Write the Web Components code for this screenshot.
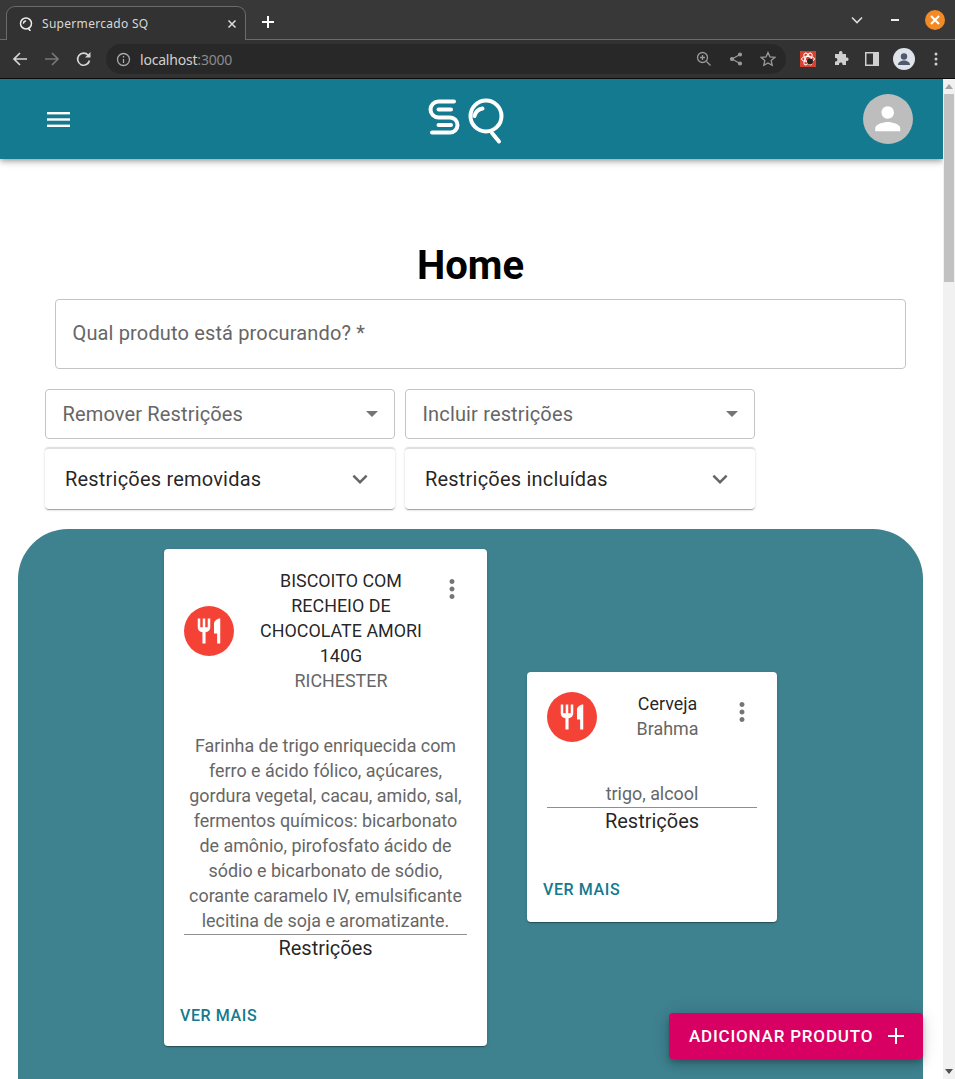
<!DOCTYPE html>
<html lang="pt-BR"><head><meta charset="utf-8"><title>Supermercado SQ</title>
<style>
html,body{margin:0;padding:0;height:1079px;overflow:hidden;background:#fff;font-family:Roboto,"Noto Sans",sans-serif}
body{display:flex;flex-direction:column}
</style></head><body>
<browser-chrome></browser-chrome>
<app-viewport>
  <app-bar></app-bar>
  <page-title>Home</page-title>
  <search-field label="Qual produto está procurando? *"></search-field>
  <filter-row>
    <select-field label="Remover Restrições"></select-field>
    <select-field label="Incluir restrições"></select-field>
  </filter-row>
  <filter-row tight>
    <accordion-box label="Restrições removidas"></accordion-box>
    <accordion-box label="Restrições incluídas"></accordion-box>
  </filter-row>
  <product-panel>
    <product-card style="width:323px" title-text="BISCOITO COM RECHEIO DE CHOCOLATE AMORI 140G" brand="RICHESTER" desc="Farinha de trigo enriquecida com ferro e ácido fólico, açúcares, gordura vegetal, cacau, amido, sal, fermentos químicos: bicarbonato de amônio, pirofosfato ácido de sódio e bicarbonato de sódio, corante caramelo IV, emulsificante lecitina de soja e aromatizante."></product-card>
    <product-card style="width:250px;min-height:250px;margin-bottom:1px;--fb:21px" title-text="Cerveja" brand="Brahma" desc="trigo, alcool"></product-card>
  </product-panel>
  <add-button>ADICIONAR PRODUTO</add-button>
</app-viewport>
<script>
const def=(n,html)=>customElements.define(n,class extends HTMLElement{connectedCallback(){if(this.shadowRoot)return;const r=this.attachShadow({mode:'open'});const a=k=>this.getAttribute(k)||'';r.innerHTML=html(a);}});

def('browser-chrome',()=>`<style>
:host{display:block;height:79px;flex:none;background:#353535;font-family:"Noto Sans",Roboto,sans-serif;color:#ddd}
.tabs{height:40px;display:flex;align-items:flex-end;border-bottom:1px solid #6b6b6b;box-sizing:border-box;background:#383838}
.tab{width:240px;height:34px;margin:0 0 -1px 6px;box-sizing:border-box;background:#323232;border:1px solid #6b6b6b;border-bottom:none;border-radius:9px 9px 0 0;display:flex;align-items:center;padding:0 8px 0 12px;font-size:12px;gap:9px;letter-spacing:.3px;color:#d8d8d8}
.tab span{flex:1;white-space:nowrap}
.plus{margin:0 0 0 15px;height:34px;display:flex;align-items:center}
.right{margin-left:auto;height:39px;display:flex;align-items:center;gap:23px;padding-right:10px}
.close{width:20px;height:20px;border-radius:50%;background:#f28a25;display:flex;align-items:center;justify-content:center}
.bar{height:38px;background:#323232;display:flex;align-items:center;box-sizing:border-box}
.nav{display:flex;align-items:center;gap:16px;padding-left:12px;width:106px;box-sizing:border-box}
.omni{width:680px;height:30px;border-radius:15px;background:#282828;display:flex;align-items:center;box-sizing:border-box;padding:0 10px;font-size:14px;gap:8px;letter-spacing:-.2px}
.omni b{font-weight:400;color:#d0d0d0}.omni i{font-style:normal;color:#8a8a8a}
.omni .end{margin-left:auto;display:flex;gap:17px;align-items:center}
.tools{display:flex;align-items:center;gap:14px;padding-left:14px}
.line{height:1px;background:#0b0b0b}
svg{display:block}
</style>
<div class="tabs"><div class="tab">
<svg width="14" height="14" viewBox="0 0 14 14" fill="none" stroke="#eee" stroke-width="1.5" stroke-linecap="round"><circle cx="7" cy="6.5" r="5.5"/><path d="M9.5 11.5l1.5 2M4.5 6a2.5 2.5 0 0 1 2-2"/></svg>
<span>Supermercado SQ</span>
<svg width="10" height="10" viewBox="0 0 10 10" stroke="#ddd" stroke-width="1.5"><path d="M1.5 1.5l7 7M8.5 1.5l-7 7"/></svg></div>
<div class="plus"><svg width="14" height="14" viewBox="0 0 14 14" stroke="#fff" stroke-width="2"><path d="M7 1v12M1 7h12"/></svg></div>
<div class="right">
<svg width="12" height="8" viewBox="0 0 12 8" fill="none" stroke="#ddd" stroke-width="1.6"><path d="M1 1.5l5 5 5-5"/></svg>
<svg width="10" height="4" viewBox="0 0 10 4" style="margin:0 1px 0 5px"><rect width="8" height="2" y="1" fill="#eee"/></svg>
<div class="close"><svg width="10" height="10" viewBox="0 0 10 10" stroke="#fff" stroke-width="2"><path d="M1 1l8 8M9 1l-8 8"/></svg></div>
</div></div>
<div class="bar"><div class="nav">
<svg width="16" height="16" viewBox="0 0 16 16" fill="none" stroke="#d5d5d5" stroke-width="1.7"><path d="M15 8H2M8 2L2 8l6 6"/></svg>
<svg width="16" height="16" viewBox="0 0 16 16" fill="none" stroke="#777" stroke-width="1.7"><path d="M1 8h13M8 2l6 6-6 6"/></svg>
<svg width="16" height="16" viewBox="0 0 16 16" fill="none" stroke="#d5d5d5" stroke-width="1.7"><path d="M13.500 9.500a6 6 0 1 1-1.300-5.200"/><path d="M14.500 1v5.500H9z" fill="#d5d5d5" stroke="none"/></svg>
</div>
<div class="omni">
<svg width="15" height="15" viewBox="0 0 15 15" fill="none" stroke="#aaa" stroke-width="1.3"><circle cx="7.500" cy="7.500" r="6"/><path d="M7.500 7v4M7.500 4v1.500"/></svg>
<span style="margin-left:1px"><b>localhost</b><i>:3000</i></span>
<span class="end">
<svg width="16" height="16" viewBox="0 0 16 16" fill="none" stroke="#9a9a9a" stroke-width="1.3"><circle cx="6.500" cy="6.500" r="5"/><path d="M10.500 10.500l4 4M4 6.500h5M6.500 4v5"/></svg>
<svg width="14" height="14" viewBox="0 0 14 14" fill="#9a9a9a" stroke="#9a9a9a" stroke-width="1.2"><path d="M11 2.500L3 7l8 4.500" fill="none"/><circle cx="11" cy="2.500" r="1.500"/><circle cx="3" cy="7" r="1.500"/><circle cx="11" cy="11.500" r="1.500"/></svg>
<svg width="16" height="16" viewBox="0 0 16 16" fill="none" stroke="#9a9a9a" stroke-width="1.3"><path d="M8 1.500l2 4.400 4.800.5-3.600 3.200 1 4.700L8 11.900l-4.200 2.400 1-4.700L1.200 6.400 6 5.900z"/></svg>
</span></div>
<div class="tools">
<svg width="16" height="16" viewBox="0 0 16 16"><rect width="16" height="16" fill="#d8402f"/><g fill="none" stroke="#fff" stroke-width="1"><ellipse cx="8" cy="8" rx="6.500" ry="2.600"/><ellipse cx="8" cy="8" rx="6.500" ry="2.600" transform="rotate(60 8 8)"/><ellipse cx="8" cy="8" rx="6.500" ry="2.600" transform="rotate(120 8 8)"/></g><circle cx="10" cy="10.500" r="3" fill="#222"/></svg>
<svg width="16" height="16" viewBox="0 0 16 16" fill="#cfcfcf" style="margin-left:3px"><path d="M6 1.500a1.800 1.800 0 0 1 3.500 0V3H13v3.500h1.200a1.800 1.800 0 0 1 0 3.500H13v4H9.500v-1a1.800 1.800 0 0 0-3.500 0v1H2V10.500h1a1.800 1.800 0 0 0 0-3.500H2V3h4z"/></svg>
<svg width="14" height="14" viewBox="0 0 14 14" style="margin-left:2px"><rect width="14" height="14" fill="#cfcfcf"/><rect x="1.500" y="1.500" width="6.500" height="11" fill="#323232"/></svg>
<svg width="22" height="22" viewBox="0 0 22 22"><circle cx="11" cy="11" r="11" fill="#dfe3ea"/><circle cx="11" cy="8.500" r="3.200" fill="#4f5a6f"/><path d="M5 17c0-3 3-4.500 6-4.500s6 1.500 6 4.500z" fill="#4f5a6f"/></svg>
<svg width="4" height="14" viewBox="0 0 4 14" fill="#cfcfcf" style="margin-left:5px"><circle cx="2" cy="2" r="1.500"/><circle cx="2" cy="7" r="1.500"/><circle cx="2" cy="12" r="1.500"/></svg>
</div></div><div class="line"></div>`);

def('app-viewport',()=>`<style>
:host{display:flex;flex:1;min-height:0;position:relative;overflow:hidden}
.main{flex:1;min-width:0;display:flex;flex-direction:column;overflow:hidden}
.sb{width:12px;flex:none;background:#f1f1f1;display:flex;flex-direction:column;align-items:center;position:relative}
.thumb{width:10px;height:188px;margin-top:15px;background:#c1c1c1}
.up,.dn{position:absolute;left:2px;width:0;height:0;border-left:4px solid transparent;border-right:4px solid transparent}
.up{top:5px;border-bottom:5px solid #a3a3a3}.dn{bottom:5px;border-top:5px solid #505050}
</style><div class="main"><slot></slot></div><div class="sb"><div class="up"></div><div class="thumb"></div><div class="dn"></div></div>`);

def('app-bar',()=>`<style>
:host{display:flex;align-items:center;justify-content:space-between;height:80px;flex:none;background:#137a8f;padding:0 30px 0 47px;box-sizing:border-box;box-shadow:0 2px 4px -1px rgba(0,0,0,.2),0 4px 5px rgba(0,0,0,.14),0 1px 10px rgba(0,0,0,.12);position:relative;z-index:2}
.a{width:50px;height:50px;border-radius:50%;background:#bdbdbd;display:flex;align-items:center;justify-content:center}
svg{display:block}
</style>
<svg width="23" height="15" viewBox="0 0 23 15" fill="#fff" style="margin-top:1px"><rect width="23" height="2.400" y="0"/><rect width="23" height="2.400" y="6.300"/><rect width="23" height="2.400" y="12.600"/></svg>
<svg width="80" height="52" viewBox="426 95 80 52" fill="none" stroke="#fff" stroke-width="4" stroke-linecap="round" stroke-linejoin="round"><path d="M453 103.500H437.500a8 8 0 0 0 0 16H449a7.500 7.500 0 0 1 0 15H431"/><path d="M437.500 111.500H450M437.500 127H450"/><circle cx="485" cy="118" r="15.500"/><path d="M473.500 118a10 10 0 0 1 8-7.500M491 135l7 8.500"/></svg>
<div class="a"><svg width="37.500" height="37.500" viewBox="0 0 24 24" fill="#fff"><path d="M12 12c2.210 0 4-1.790 4-4s-1.790-4-4-4-4 1.790-4 4 1.790 4 4 4zm0 2c-2.670 0-8 1.340-8 4v2h16v-2c0-2.660-5.330-4-8-4z"/></svg></div>`);

def('page-title',()=>`<style>:host{display:block;flex:none;margin-top:79px;height:61px;padding-right:2px}
h1{margin:0;font:700 40px/56px Roboto,sans-serif;text-align:center;color:#000}</style><h1><slot></slot></h1>`);

def('search-field',a=>`<style>:host{display:block;flex:none;height:70px;margin:0 37px 0 55px;box-sizing:border-box;border:1px solid #c4c4c4;border-radius:4px;padding:0 16.500px;font:400 20px/66px Roboto,sans-serif;color:#666;letter-spacing:.15px}</style>${a('label')}`);

def('filter-row',()=>`<style>:host{display:flex;flex:none;gap:10px;margin:20px 0 0 45px}:host([tight]){margin-top:8px}</style><slot></slot>`);

def('select-field',a=>`<style>:host{display:flex;align-items:center;justify-content:space-between;width:350px;height:50px;box-sizing:border-box;border:1px solid #c4c4c4;border-radius:4px;padding:0 16px 0 16.500px;font:400 20px/24px Roboto,sans-serif;color:#666;letter-spacing:.15px}
i{width:0;height:0;border-left:6px solid transparent;border-right:6px solid transparent;border-top:6px solid #757575}</style><span>${a('label')}</span><i></i>`);

def('accordion-box',a=>`<style>:host{display:flex;align-items:center;justify-content:space-between;width:350px;height:62px;box-sizing:border-box;background:#fff;border-radius:4px;padding:0 20px;font:400 20px/24px Roboto,sans-serif;color:rgba(0,0,0,.87);letter-spacing:.2px;box-shadow:0 2px 1px -1px rgba(0,0,0,.2),0 1px 1px rgba(0,0,0,.14),0 1px 3px rgba(0,0,0,.12);border-top:2px solid #e0e0e0}
svg{display:block}</style><span>${a('label')}</span><svg width="30" height="30" viewBox="0 0 24 24" fill="#666"><path d="M16.590 8.590 12 13.170 7.410 8.590 6 10l6 6 6-6z"/></svg>`);

def('product-panel',()=>`<style>:host{display:block;flex:none;margin:20px 20px 0 18px;background:#3e818f;border-radius:50px 50px 0 0;padding:20px 0 80px 146px;box-sizing:border-box}
.row{display:flex;align-items:center;gap:40px}</style><div class="row"><slot></slot></div>`);

def('product-card',a=>`<style>:host{display:flex;flex-direction:column;flex:none;box-sizing:border-box;background:#fff;border-radius:4px;box-shadow:0 2px 1px -1px rgba(0,0,0,.2),0 1px 1px rgba(0,0,0,.14),0 1px 3px rgba(0,0,0,.12);font-family:Roboto,sans-serif}
.head{display:flex;align-items:center;padding:20px 20px 0;height:var(--hh,auto)}
.av{width:50px;height:50px;border-radius:50%;background:#f44336;flex:none;display:flex;align-items:center;justify-content:center;margin:0 16px 1px 0}
.tt{flex:1;min-width:0;text-align:center;font-size:17.9px;line-height:25px;color:rgba(0,0,0,.87);margin-top:-1px;padding-bottom:1px}
.br{color:#666}
.act{align-self:flex-start;flex:none;width:40px;height:40px;margin-right:-5px;display:flex;align-items:center;justify-content:center}
.body{padding:38.500px 20px 0;text-align:center}
.d{font-size:17.9px;line-height:25px;color:#666;border-bottom:1px solid #8f8f8f;margin:0;padding-bottom:1px}
.r{font-size:20px;line-height:27px;color:rgba(0,0,0,.87)}
.foot{margin-top:auto;padding:43px 16px var(--fb,19px);font-size:16px;font-weight:500;line-height:22px;color:#137a8f;letter-spacing:.6px}
svg{display:block}
</style>
<div class="head"><div class="av"><svg width="30" height="30" viewBox="0 0 24 24" fill="#fff"><path d="M11 9H9V2H7v7H5V2H3v7c0 2.120 1.660 3.840 3.750 3.970V22h2.500v-9.030C11.340 12.840 13 11.120 13 9V2h-2v7zm5-3v8h2.500v8H21V2c-2.760 0-5 2.240-5 4z"/></svg></div>
<div class="tt"><div>${a('title-text')}</div><div class="br">${a('brand')}</div></div>
<div class="act"><svg width="30" height="30" viewBox="0 0 24 24" fill="#757575"><path d="M12 8c1.100 0 2-.9 2-2s-.9-2-2-2-2 .9-2 2 .9 2 2 2zm0 2c-1.100 0-2 .9-2 2s.9 2 2 2 2-.9 2-2-.9-2-2-2zm0 6c-1.100 0-2 .9-2 2s.9 2 2 2 2-.9 2-2-.9-2-2-2z"/></svg></div></div>
<div class="body"><p class="d">${a('desc')}</p><div class="r">Restrições</div></div>
<div class="foot">VER MAIS</div>`);

def('add-button',()=>`<style>:host{position:absolute;left:669px;top:934px;width:254px;height:46px;box-sizing:border-box;background:#d80062;color:#fff;border-radius:4px;display:flex;align-items:center;padding-left:20px;gap:15px;font:500 17px/24px Roboto,sans-serif;letter-spacing:.8px;box-shadow:0 3px 5px -1px rgba(0,0,0,.2),0 6px 10px rgba(0,0,0,.14),0 1px 18px rgba(0,0,0,.12);z-index:3}
svg{display:block}</style><span><slot></slot></span><svg width="16" height="16" viewBox="0 0 16 16" stroke="#fff" stroke-width="2"><path d="M8 0v16M0 8h16"/></svg>`);
</script>
</body></html>
